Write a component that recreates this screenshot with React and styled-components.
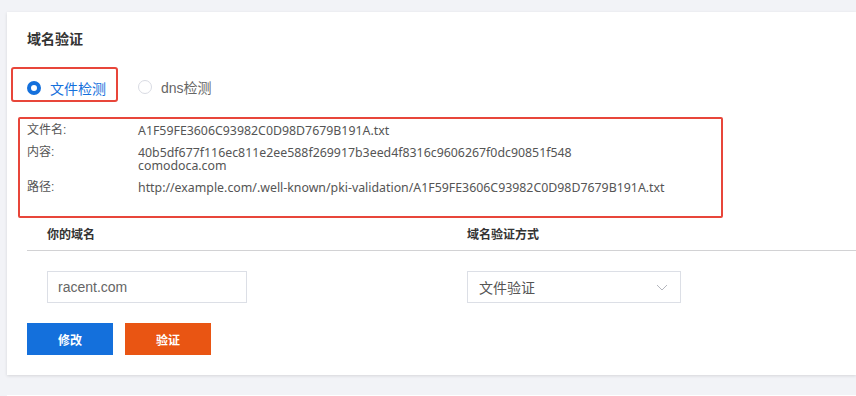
import React, { useState } from 'react';
import styled, { createGlobalStyle } from 'styled-components';

const GlobalStyle = createGlobalStyle`
  html, body {
    margin: 0;
    padding: 0;
    background: #f2f3f7;
    font-family: "Liberation Sans", "Noto Sans CJK SC", sans-serif;
    overflow: hidden;
  }
`;

const Page = styled.div`
  padding: 12px 0 0 7px;
  display: flex;
  flex-direction: column;
  gap: 20px;
`;

const Card = styled.div`
  background: #fff;
  box-shadow: 0 1px 3px rgba(0, 0, 0, 0.12);
  height: 363px;
  padding: 0 0 0 4px;
  box-sizing: border-box;
`;

const NextCard = styled.div`
  background: #fff;
  height: 40px;
`;

const Title = styled.div`
  font-size: 14px;
  font-weight: 700;
  color: #333;
  padding: 18px 0 0 16px;
  line-height: 18px;
`;

const RadioBox = styled.div`
  margin-top: 19px;
  display: flex;
  align-items: center;
`;

const Highlight = styled.div`
  border: 2px solid ${({ $show }) => ($show ? '#e8463a' : 'transparent')};
  border-radius: 3px;
  height: 35px;
  box-sizing: border-box;
  display: flex;
  align-items: center;
  padding: 7px 10px 0 14px;
`;

const RadioItem = styled.label`
  display: flex;
  align-items: center;
  gap: 9px;
  font-size: 14px;
  cursor: pointer;
  color: ${({ $active }) => ($active ? '#1470dc' : '#666')};
  margin-left: ${({ $offset }) => $offset || 0}px;
  padding-top: ${({ $offset }) => ($offset ? 5 : 0)}px;
`;

const Circle = styled.span`
  width: 14px;
  height: 14px;
  border-radius: 50%;
  box-sizing: border-box;
  border: ${({ $active }) => ($active ? '4px solid #1470dc' : '1px solid #d9dbe3')};
  background: #fff;
`;

const InfoBox = styled.div`
  margin: 15px 0 0 7px;
  width: 705px;
  height: 101px;
  box-sizing: border-box;
  border: 2px solid #e8463a;
  border-radius: 2px;
  padding: 5px 0 0 7px;
  display: flex;
  flex-direction: column;
  gap: 9px;
`;

const InfoRow = styled.div`
  display: grid;
  grid-template-columns: 111px 1fr;
  font-size: 12px;
  line-height: 13px;
  color: #555;
`;

const Value = styled.div`
  font-family: "Noto Sans", "Noto Sans CJK SC", sans-serif;
  font-size: 12.35px;
  line-height: 12px;
  padding-top: 1px;
`;

const Table = styled.div`
  margin: 10px 0 0 16px;
`;

const HeadRow = styled.div`
  display: grid;
  grid-template-columns: 420px 1fr;
  border-bottom: 1px solid #d2d2d4;
  padding: 0 0 8px 20px;
  font-size: 12px;
  font-weight: 700;
  color: #333;
  line-height: 14px;
`;

const BodyRow = styled.div`
  display: grid;
  grid-template-columns: 420px 1fr;
  padding: 20px 0 0 20px;
`;

const Input = styled.input`
  width: 200px;
  height: 32px;
  box-sizing: border-box;
  border: 1px solid #dcdfe6;
  padding: 0 10px;
  font-family: inherit;
  font-size: 14px;
  color: #666;
  outline: none;
`;

const Select = styled.div`
  width: 214px;
  height: 32px;
  box-sizing: border-box;
  border: 1px solid #dcdfe6;
  padding: 0 12px 0 11px;
  display: flex;
  align-items: center;
  justify-content: space-between;
  font-size: 14px;
  color: #555;
`;

const Actions = styled.div`
  display: flex;
  gap: 12px;
  margin-top: 20px;
`;

const Button = styled.button`
  width: 86px;
  height: 32px;
  border: none;
  background: ${({ $variant }) => ($variant === 'warn' ? '#e95513' : '#1470dc')};
  color: #fff;
  font-family: inherit;
  font-size: 12px;
  font-weight: 700;
  cursor: pointer;
`;

const info = [
  { label: '文件名:', value: ['A1F59FE3606C93982C0D98D7679B191A.txt'] },
  { label: '内容:', value: ['40b5df677f116ec811e2ee588f269917b3eed4f8316c9606267f0dc90851f548', 'comodoca.com'] },
  { label: '路径:', value: ['http://example.com/.well-known/pki-validation/A1F59FE3606C93982C0D98D7679B191A.txt'] },
];

export default function App() {
  const [mode, setMode] = useState('file');
  const [domain, setDomain] = useState('racent.com');

  return (
    <Page>
      <GlobalStyle />
      <Card>
        <Title>域名验证</Title>
        <RadioBox>
          <Highlight $show>
            <RadioItem $active={mode === 'file'} onClick={() => setMode('file')}>
              <Circle $active={mode === 'file'} />
              文件检测
            </RadioItem>
          </Highlight>
          <RadioItem $active={mode === 'dns'} $offset={20} onClick={() => setMode('dns')}>
            <Circle $active={mode === 'dns'} />
            dns检测
          </RadioItem>
        </RadioBox>
        <InfoBox>
          {info.map((row) => (
            <InfoRow key={row.label}>
              <span>{row.label}</span>
              <div>
                {row.value.map((v) => (
                  <Value key={v}>{v}</Value>
                ))}
              </div>
            </InfoRow>
          ))}
        </InfoBox>
        <Table>
          <HeadRow>
            <span>你的域名</span>
            <span>域名验证方式</span>
          </HeadRow>
          <BodyRow>
            <Input value={domain} onChange={(e) => setDomain(e.target.value)} />
            <Select>
              文件验证
              <svg width="12" height="7" viewBox="0 0 12 7" fill="none">
                <path d="M1 1l5 5 5-5" stroke="#b4b6bd" strokeWidth="1" />
              </svg>
            </Select>
          </BodyRow>
          <Actions>
            <Button>修改</Button>
            <Button $variant="warn">验证</Button>
          </Actions>
        </Table>
      </Card>
      <NextCard />
    </Page>
  );
}
